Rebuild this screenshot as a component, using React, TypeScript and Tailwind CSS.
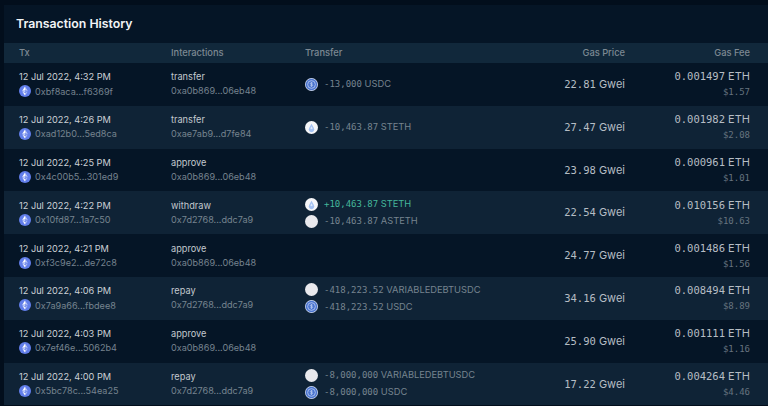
import React from 'react';

type Transfer = { token: 'usdc' | 'steth' | 'blank'; amount: string; symbol: string; positive?: boolean };

type Tx = {
  date: string;
  hash: string;
  method: string;
  contract: string;
  transfers: Transfer[];
  gasPrice: string;
  fee: string;
  usd: string;
};

const txs: Tx[] = [
  { date: '12 Jul 2022, 4:32 PM', hash: '0xbf8aca...f6369f', method: 'transfer', contract: '0xa0b869...06eb48', transfers: [{ token: 'usdc', amount: '-13,000', symbol: 'USDC' }], gasPrice: '22.81', fee: '0.001497', usd: '$1.57' },
  { date: '12 Jul 2022, 4:26 PM', hash: '0xad12b0...5ed8ca', method: 'transfer', contract: '0xae7ab9...d7fe84', transfers: [{ token: 'steth', amount: '-10,463.87', symbol: 'STETH' }], gasPrice: '27.47', fee: '0.001982', usd: '$2.08' },
  { date: '12 Jul 2022, 4:25 PM', hash: '0x4c00b5...301ed9', method: 'approve', contract: '0xa0b869...06eb48', transfers: [], gasPrice: '23.98', fee: '0.000961', usd: '$1.01' },
  { date: '12 Jul 2022, 4:22 PM', hash: '0x10fd87...1a7c50', method: 'withdraw', contract: '0x7d2768...ddc7a9', transfers: [{ token: 'steth', amount: '+10,463.87', symbol: 'STETH', positive: true }, { token: 'blank', amount: '-10,463.87', symbol: 'ASTETH' }], gasPrice: '22.54', fee: '0.010156', usd: '$10.63' },
  { date: '12 Jul 2022, 4:21 PM', hash: '0xf3c9e2...de72c8', method: 'approve', contract: '0xa0b869...06eb48', transfers: [], gasPrice: '24.77', fee: '0.001486', usd: '$1.56' },
  { date: '12 Jul 2022, 4:06 PM', hash: '0x7a9a66...fbdee8', method: 'repay', contract: '0x7d2768...ddc7a9', transfers: [{ token: 'blank', amount: '-418,223.52', symbol: 'VARIABLEDEBTUSDC' }, { token: 'usdc', amount: '-418,223.52', symbol: 'USDC' }], gasPrice: '34.16', fee: '0.008494', usd: '$8.89' },
  { date: '12 Jul 2022, 4:03 PM', hash: '0x7ef46e...5062b4', method: 'approve', contract: '0xa0b869...06eb48', transfers: [], gasPrice: '25.90', fee: '0.001111', usd: '$1.16' },
  { date: '12 Jul 2022, 4:00 PM', hash: '0x5bc78c...54ea25', method: 'repay', contract: '0x7d2768...ddc7a9', transfers: [{ token: 'blank', amount: '-8,000,000', symbol: 'VARIABLEDEBTUSDC' }, { token: 'usdc', amount: '-8,000,000', symbol: 'USDC' }], gasPrice: '17.22', fee: '0.004264', usd: '$4.46' },
];

const mono = "font-['DejaVu_Sans_Mono',monospace]";

function EthIcon() {
  return (
    <svg width="12" height="12" viewBox="0 0 32 32" className="shrink-0">
      <circle cx="16" cy="16" r="16" fill="#627eea" />
      <path d="M16 4v9l7.5 3.3z" fill="#fff" fillOpacity=".6" />
      <path d="M16 4L8.5 16.3 16 13z" fill="#fff" />
      <path d="M16 22v6l7.5-10.4z" fill="#fff" fillOpacity=".6" />
      <path d="M16 28v-6l-7.5-4.4z" fill="#fff" />
      <path d="M16 20.6l7.5-4.3L16 13z" fill="#fff" fillOpacity=".2" />
      <path d="M8.5 16.3l7.5 4.3V13z" fill="#fff" fillOpacity=".6" />
    </svg>
  );
}

function TokenIcon({ token }: { token: Transfer['token'] }) {
  if (token === 'usdc') {
    return (
      <svg width="13" height="13" viewBox="0 0 32 32" className="shrink-0">
        <circle cx="16" cy="16" r="16" fill="#cfdaf3" />
        <circle cx="16" cy="16" r="14" fill="#4a74cf" />
        <circle cx="16" cy="16" r="9.500" fill="none" stroke="#bccdf0" strokeWidth="2" />
        <path d="M16 10v12M19 13c-1.500-1.500-6-1.500-6 1s6 1 6 3.500-4.500 2.500-6 1" fill="none" stroke="#bccdf0" strokeWidth="1.800" />
      </svg>
    );
  }
  if (token === 'steth') {
    return (
      <svg width="13" height="13" viewBox="0 0 32 32" className="shrink-0">
        <circle cx="16" cy="16" r="16" fill="#f5f6f9" />
        <path d="M16 7l-5.500 9.500a6.800 6.800 0 1 0 11 0z" fill="#a3c1f2" />
        <path d="M16 13l-3 5.500 3 2 3-2z" fill="#dce8fb" />
      </svg>
    );
  }
  return <span className="size-[13px] shrink-0 rounded-full bg-[#e9e9ed]" />;
}

function TransferLine({ t }: { t: Transfer }) {
  return (
    <div className="flex h-[17px] items-center gap-[6px]">
      <TokenIcon token={t.token} />
      <span className={`whitespace-nowrap text-[9.300px] ${t.positive ? 'text-[#45b79b]' : 'text-[#76838f]'}`}>
        <span className={`${mono} text-[9px]`}>{t.amount}</span> {t.symbol}
      </span>
    </div>
  );
}

function Row({ tx, odd }: { tx: Tx; odd: boolean }) {
  return (
    <div className={`grid h-[42.800px] grid-cols-[152px_134px_1fr_125px] items-center pl-[15px] pr-[18px] ${odd ? 'bg-[#051526]' : 'bg-[#0f2336]'}`}>
      <div className="pb-[1px]">
        <div className="text-[9.200px] leading-[15px] text-[#ccd1d6]">{tx.date}</div>
        <div className="flex h-[14px] items-center gap-[4px] text-[9.100px] text-[#76838f]">
          <EthIcon />
          {tx.hash}
        </div>
      </div>
      <div className="pb-[1px]">
        <div className="text-[9.200px] leading-[15px] text-[#c3c9cf]">{tx.method}</div>
        <div className="h-[14px] text-[9.100px] leading-[14px] text-[#76838f]">{tx.contract}</div>
      </div>
      <div className="flex items-center justify-between">
        <div>
          {tx.transfers.map((t) => (
            <TransferLine key={t.symbol} t={t} />
          ))}
        </div>
        <div className="text-[11px] text-[#b6bdc4]">
          <span className={`${mono} text-[10.500px]`}>{tx.gasPrice}</span> Gwei
        </div>
      </div>
      <div className="pb-[1px] text-right">
        <div className="text-[11px] leading-[15px] text-[#b6bdc4]">
          <span className={`${mono} text-[10.500px]`}>{tx.fee}</span> ETH
        </div>
        <div className={`${mono} mt-[2px] text-[9px] leading-[12px] text-[#66737f]`}>{tx.usd}</div>
      </div>
    </div>
  );
}

export default function App() {
  return (
    <div className="h-[406px] overflow-hidden bg-[#020e1c] pt-[5px] pl-[4px] font-['Inter',sans-serif]">
      <div className="bg-[#051526]">
        <div className="flex h-[38px] items-center pl-[12px] text-[12.300px] font-semibold text-[#f2f4f6]">Transaction History</div>
        <div className="grid h-[20px] grid-cols-[152px_134px_1fr_125px] items-center bg-[#11283b] pl-[15px] pr-[18px] text-[9.300px] font-medium text-[#7d8993]">
          <div>Tx</div>
          <div>Interactions</div>
          <div className="flex justify-between">
            <span>Transfer</span>
            <span>Gas Price</span>
          </div>
          <div className="text-right">Gas Fee</div>
        </div>
        {txs.map((tx, i) => (
          <Row key={tx.hash} tx={tx} odd={i % 2 === 0} />
        ))}
      </div>
    </div>
  );
}
